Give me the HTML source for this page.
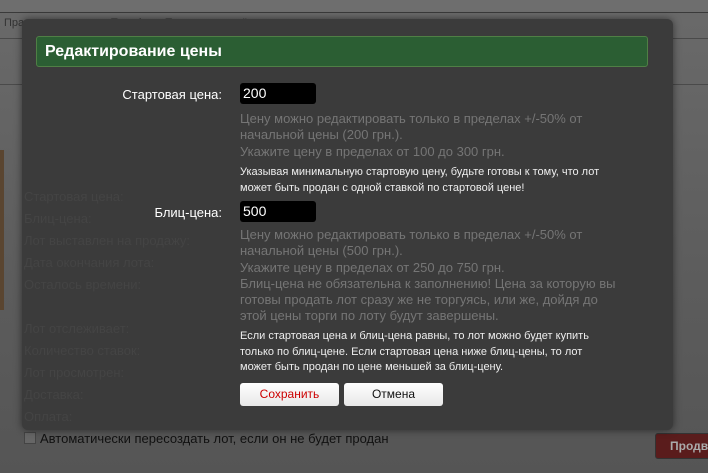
<!DOCTYPE html>
<html><head><meta charset="utf-8"><style>
body{margin:0;width:708px;height:473px;overflow:hidden;background:linear-gradient(#6a6a6a,#5c5c5c 60%,#555);font-family:"Liberation Sans","DejaVu Sans",sans-serif;position:relative}
.top{position:absolute;left:0;top:0;width:708px;height:12px;background:#6e6e6e;border-bottom:1px solid #3a3a3a}
.nav{position:absolute;left:4px;top:17px;font-size:11px;color:#333}
.l1{position:absolute;left:0;top:38px;width:708px;height:1px;background:#4a4a4a}
.l2{position:absolute;left:0;top:84px;width:708px;height:1px;background:#4a4a4a}
.img{position:absolute;left:0;top:150px;width:4px;height:160px;background:#5a4530}
.chk{position:absolute;left:24px;top:431px;font-size:13px;color:#111}
.chk span{display:inline-block;width:10px;height:10px;border:1px solid #444;background:#666;vertical-align:-1px;margin-right:4px}
.prod{position:absolute;left:655px;top:433px;width:60px;height:24px;background:#5a1c1c;border:1px solid #333;border-radius:3px;color:#aaa;font-weight:bold;font-size:12px;line-height:24px;padding-left:14px}
.modal{position:absolute;left:22px;top:19px;width:651px;height:411px;background:#3b3b3b;border-radius:6px;box-shadow:0 0 8px rgba(0,0,0,.5)}
.hd{position:absolute;left:14px;top:17px;width:602px;height:29px;background:#2b5e33;border:1px solid #4f7f45;border-radius:3px;color:#fff;font-weight:bold;font-size:16px;line-height:29px;padding-left:8px}
.lbl{position:absolute;color:#fff;font-size:13px;text-align:right;width:200px}
.inp{position:absolute;left:218px;width:73px;height:21px;background:#000;border-radius:3px;color:#fff;font-size:14px;line-height:21px;padding-left:3px}
.g{position:absolute;left:218px;color:#757575;font-size:13px;line-height:16.3px;width:410px}
.w{position:absolute;left:218px;color:#eee;font-size:11px;line-height:15.5px;width:420px}
.ghost{position:absolute;color:#444;font-size:13px;line-height:22px}
.btn{position:absolute;top:364px;width:99px;height:23px;background:linear-gradient(#fff,#e8e8e8);border-radius:3px;font-size:12px;text-align:center;line-height:23px}
</style></head><body>
<div class="top"></div>
<div class="nav">Правила аукциона &nbsp;&nbsp; Тарифы &nbsp;&nbsp; Пополнение счёта</div>
<div class="l1"></div><div class="l2"></div><div class="img"></div>
<div class="chk"><span></span>Автоматически пересоздать лот, если он не будет продан</div>
<div class="prod">Продв</div>
<div class="modal">
<div class="ghost" style="left:2px;top:167px">Стартовая цена:<br>Блиц-цена:<br>Лот выставлен на продажу:<br>Дата окончания лота:<br>Осталось времени:<br><br>Лот отслеживает:<br>Количество ставок:<br>Лот просмотрен:<br>Доставка:<br>Оплата:</div>
<div class="hd">Редактирование цены</div>
<div class="lbl" style="left:0;top:68px">Стартовая цена:</div>
<div class="inp" style="top:64px">200</div>
<div class="g" style="top:92px">Цену можно редактировать только в пределах +/-50% от<br>начальной цены (200 грн.).<br>Укажите цену в пределах от 100 до 300 грн.</div>
<div class="w" style="top:146px">Указывая минимальную стартовую цену, будьте готовы к тому, что лот<br>может быть продан с одной ставкой по стартовой цене!</div>
<div class="lbl" style="left:0;top:186px">Блиц-цена:</div>
<div class="inp" style="top:182px">500</div>
<div class="g" style="top:208px">Цену можно редактировать только в пределах +/-50% от<br>начальной цены (500 грн.).<br>Укажите цену в пределах от 250 до 750 грн.<br>Блиц-цена не обязательна к заполнению! Цена за которую вы<br>готовы продать лот сразу же не торгуясь, или же, дойдя до<br>этой цены торги по лоту будут завершены.</div>
<div class="w" style="top:310px">Если стартовая цена и блиц-цена равны, то лот можно будет купить<br>только по блиц-цене. Если стартовая цена ниже блиц-цены, то лот<br>может быть продан по цене меньшей за блиц-цену.</div>
<div class="btn" style="left:218px;color:#c00">Сохранить</div>
<div class="btn" style="left:322px;color:#111">Отмена</div>
</div>
</body></html>
